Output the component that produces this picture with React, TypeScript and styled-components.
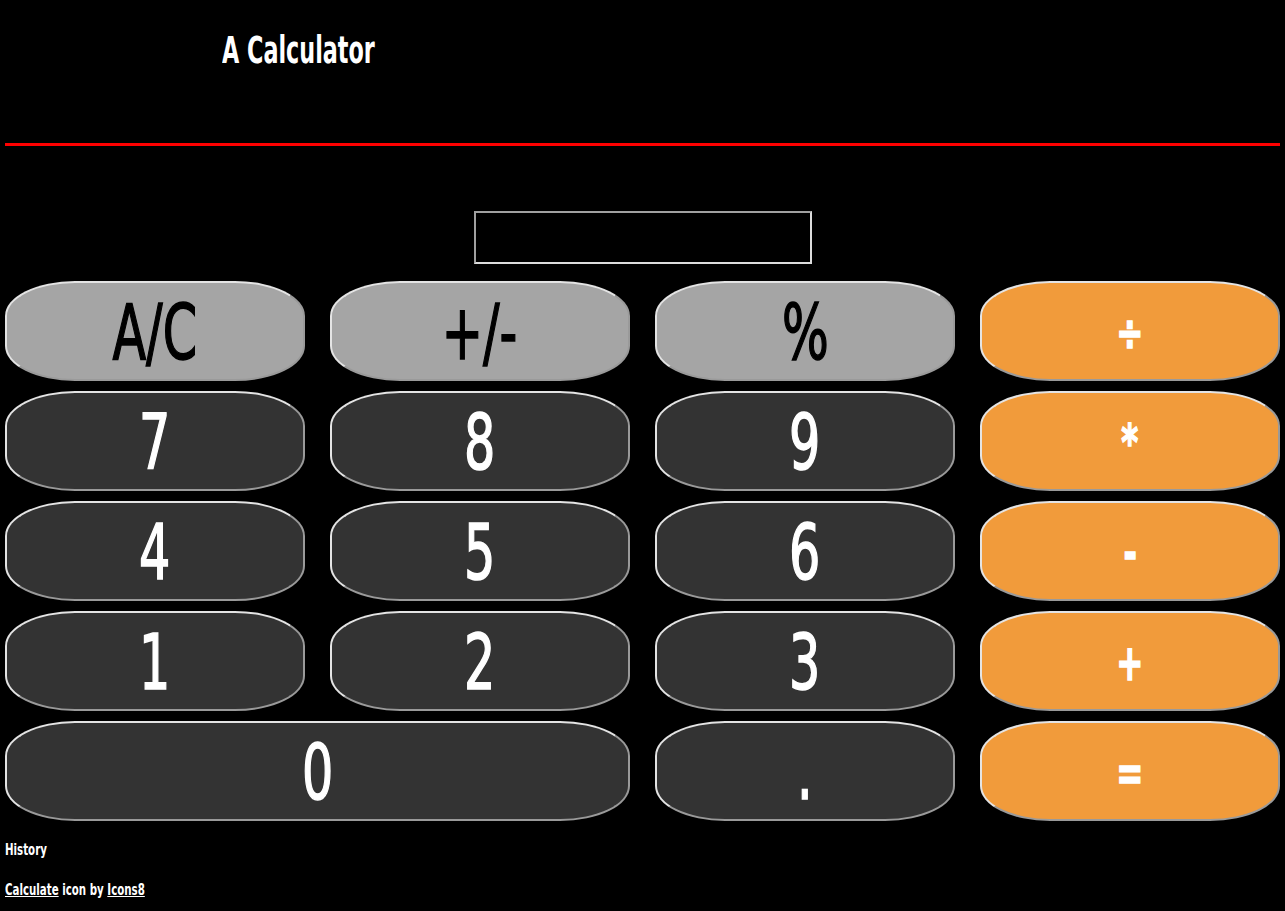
import React from "react";
import styled, { createGlobalStyle } from "styled-components";

const Global = createGlobalStyle`
  html, body { margin: 0; padding: 0; background: #000; }
  body { font-family: "DejaVu Sans Condensed", "Liberation Sans", sans-serif; color: #fff; }
`;

const Page = styled.div`
  padding: 0 5px;
  display: flex;
  flex-direction: column;
`;

const Header = styled.header`
  height: 143px;
  padding-left: 217px;
  box-sizing: border-box;
`;

const Title = styled.h1`
  margin: 0;
  padding-top: 31px;
  font-size: 37px;
  font-weight: 700;
  line-height: 40px;
  transform: scaleX(0.67);
  transform-origin: left center;
  white-space: nowrap;
`;

const Rule = styled.hr`
  margin: 0;
  border: none;
  height: 3px;
  background: #ff0000;
`;

const DisplayRow = styled.div`
  display: flex;
  justify-content: center;
  padding-top: 65px;
  padding-bottom: 17px;
`;

const Display = styled.input`
  width: 338px;
  height: 53px;
  box-sizing: border-box;
  background: #000;
  border: 2px solid;
  border-color: #a0a0a0 #dcdcdc #dcdcdc #a0a0a0;
  color: #fff;
  font-size: 28px;
  padding: 0 8px;
  outline: none;
`;

const Keys = styled.div`
  display: grid;
  grid-template-columns: repeat(4, 1fr);
  grid-auto-rows: 100px;
  column-gap: 25px;
  row-gap: 10px;
`;

type Kind = "fn" | "num" | "op";

const bg: Record<Kind, string> = { fn: "#a5a5a5", num: "#333333", op: "#f19b3b" };
const fg: Record<Kind, string> = { fn: "#000", num: "#fff", op: "#fff" };

const Key = styled.button<{ $kind: Kind; $span?: number }>`
  grid-column: span ${(p) => p.$span ?? 1};
  background: ${(p) => bg[p.$kind]};
  color: ${(p) => fg[p.$kind]};
  border: 2px solid;
  border-color: #e4e4e4 #9a9a9a #9a9a9a #e4e4e4;
  border-radius: 70px / 35px;
  font-family: inherit;
  font-weight: ${(p) => (p.$kind === "op" ? 700 : 400)};
  font-size: ${(p) => (p.$kind === "op" ? "50px" : "76px")};
  line-height: 1;
  padding: 4px 0 0;
  display: flex;
  align-items: center;
  justify-content: center;
  cursor: pointer;
`;

const Glyph = styled.span`
  display: inline-block;
  transform: scaleX(0.72);
  -webkit-text-stroke: 1.5px currentColor;
`;

const Footer = styled.div`
  padding-top: 20px;
  font-size: 15px;
  font-weight: 700;
  line-height: 18px;
  display: flex;
  flex-direction: column;
  gap: 22px;
`;

const Line = styled.div`
  transform: scaleX(0.76);
  transform-origin: left center;
  white-space: nowrap;
`;

const Link = styled.a`
  color: #fff;
  text-decoration: underline;
`;

const keys: { label: string; kind: Kind; span?: number }[] = [
  { label: "A/C", kind: "fn" },
  { label: "+/-", kind: "fn" },
  { label: "%", kind: "fn" },
  { label: "÷", kind: "op" },
  { label: "7", kind: "num" },
  { label: "8", kind: "num" },
  { label: "9", kind: "num" },
  { label: "*", kind: "op" },
  { label: "4", kind: "num" },
  { label: "5", kind: "num" },
  { label: "6", kind: "num" },
  { label: "-", kind: "op" },
  { label: "1", kind: "num" },
  { label: "2", kind: "num" },
  { label: "3", kind: "num" },
  { label: "+", kind: "op" },
  { label: "0", kind: "num", span: 2 },
  { label: ".", kind: "num" },
  { label: "=", kind: "op" },
];

export default function App() {
  return (
    <>
      <Global />
      <Page>
        <Header>
          <Title>A Calculator</Title>
        </Header>
        <Rule />
        <DisplayRow>
          <Display type="text" readOnly />
        </DisplayRow>
        <Keys>
          {keys.map((k) => (
            <Key key={k.label} $kind={k.kind} $span={k.span}>
              <Glyph>{k.label}</Glyph>
            </Key>
          ))}
        </Keys>
        <Footer>
          <Line>History</Line>
          <Line>
            <Link href="#">Calculate</Link> icon by <Link href="#">Icons8</Link>
          </Line>
        </Footer>
      </Page>
    </>
  );
}
